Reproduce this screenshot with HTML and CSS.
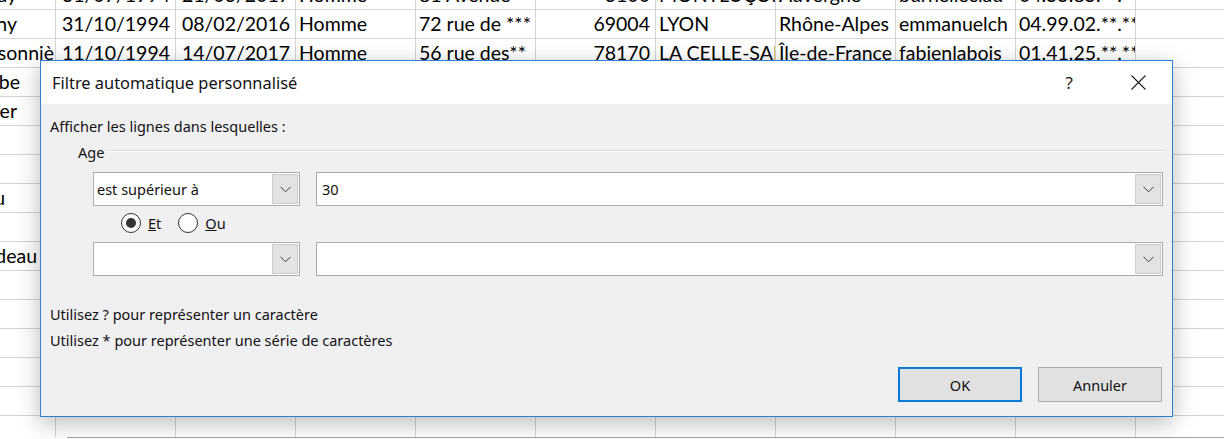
FILE: index.html
```html
<!DOCTYPE html>
<html lang="fr">

<head>
    <meta charset="UTF-8">
    <meta name="viewport" content="width=device-width, initial-scale=1.0">
    <title>Filtre automatique personnalisé</title>
    <link rel="stylesheet" href="styles.css">
</head>

<body>
    <div class="sheet">
        <div class="rows">
            <div class="row">
                <div class="cell first">nday</div>
                <div class="cell num">31/07/1994</div>
                <div class="cell num">21/03/2017</div>
                <div class="cell">Homme</div>
                <div class="cell">81 Avenue</div>
                <div class="cell num">3100</div>
                <div class="cell">MONTLUÇON</div>
                <div class="cell">Auvergne</div>
                <div class="cell">burnelleclau</div>
                <div class="cell">04.55.85.**.**</div>
            </div>
            <div class="row">
                <div class="cell first">ny</div>
                <div class="cell num">31/10/1994</div>
                <div class="cell num">08/02/2016</div>
                <div class="cell">Homme</div>
                <div class="cell">72 rue de ***</div>
                <div class="cell num">69004</div>
                <div class="cell">LYON</div>
                <div class="cell">Rhône-Alpes</div>
                <div class="cell">emmanuelch</div>
                <div class="cell">04.99.02.**.**</div>
            </div>
            <div class="row">
                <div class="cell first flush">sonniè</div>
                <div class="cell num">11/10/1994</div>
                <div class="cell num">14/07/2017</div>
                <div class="cell">Homme</div>
                <div class="cell">56 rue des**</div>
                <div class="cell num">78170</div>
                <div class="cell">LA CELLE-SAINT</div>
                <div class="cell">Île-de-France</div>
                <div class="cell">fabienlabois</div>
                <div class="cell">01.41.25.**.**</div>
            </div>
            <div class="row"><div class="cell first wide">be</div></div>
            <div class="row"><div class="cell first">er</div></div>
            <div class="row"></div>
            <div class="row"></div>
            <div class="row"><div class="cell first short">u</div></div>
            <div class="row"></div>
            <div class="row"><div class="cell first mid">deau</div></div>
        </div>
    </div>
    <div class="sheet-bottom"></div>

    <div class="dialog">
        <div class="titlebar">
            <span class="title">Filtre automatique personnalisé</span>
            <span class="help">?</span>
            <span class="close">
                <svg width="15" height="15" viewBox="0 0 15 15">
                    <path d="M0.5 0.5 L14.5 14.5 M14.5 0.5 L0.5 14.5" stroke="#1a1a1a" stroke-width="1.1" fill="none" />
                </svg>
            </span>
        </div>
        <div class="dialog-body">
            <p class="intro">Afficher les lignes dans lesquelles :</p>
            <div class="group-label"><span>Age</span></div>

            <div class="crit-row">
                <div class="combo op">
                    <span class="combo-text">est supérieur à</span>
                    <span class="combo-btn">
                        <svg width="11" height="7" viewBox="0 0 11 7">
                            <polyline points="0.5,0.8 5.5,5.8 10.5,0.8" stroke="#3c3c3c" fill="none" />
                        </svg>
                    </span>
                </div>
                <div class="combo value">
                    <span class="combo-text">30</span>
                    <span class="combo-btn">
                        <svg width="11" height="7" viewBox="0 0 11 7">
                            <polyline points="0.5,0.8 5.5,5.8 10.5,0.8" stroke="#3c3c3c" fill="none" />
                        </svg>
                    </span>
                </div>
            </div>

            <div class="radios">
                <label class="radio"><span class="dot checked"></span><span><u>E</u>t</span></label>
                <label class="radio"><span class="dot"></span><span><u>O</u>u</span></label>
            </div>

            <div class="crit-row second">
                <div class="combo op">
                    <span class="combo-text"></span>
                    <span class="combo-btn">
                        <svg width="11" height="7" viewBox="0 0 11 7">
                            <polyline points="0.5,0.8 5.5,5.8 10.5,0.8" stroke="#3c3c3c" fill="none" />
                        </svg>
                    </span>
                </div>
                <div class="combo value">
                    <span class="combo-text"></span>
                    <span class="combo-btn">
                        <svg width="11" height="7" viewBox="0 0 11 7">
                            <polyline points="0.5,0.8 5.5,5.8 10.5,0.8" stroke="#3c3c3c" fill="none" />
                        </svg>
                    </span>
                </div>
            </div>

            <p class="hint first-hint">Utilisez ? pour représenter un caractère</p>
            <p class="hint">Utilisez * pour représenter une série de caractères</p>

            <div class="buttons">
                <button class="btn default">OK</button>
                <button class="btn">Annuler</button>
            </div>
        </div>
    </div>
</body>

</html>
```

FILE: styles.css
```css
* {
    margin: 0;
    padding: 0;
    box-sizing: border-box;
}

body {
    position: relative;
    width: 1224px;
    height: 439px;
    overflow: hidden;
    background: #ffffff;
    color: #000000;
}

/* spreadsheet behind the dialog */
.sheet {
    height: 437px;
    overflow: hidden;
    background-image:
        linear-gradient(to right, #d4d4d4 1px, transparent 1px),
        linear-gradient(to bottom, #d4d4d4 1px, transparent 1px);
    background-size: 120px 100%, 100% 29px;
    background-position: 55px 0, 0 9px;
    font-family: Lato, "Liberation Sans", sans-serif;
    font-size: 19.5px;
}

.rows {
    margin: -20px 0 0 -65px;
}

.row {
    display: grid;
    grid-template-columns: repeat(10, 120px);
    height: 29px;
}

.cell {
    overflow: hidden;
    white-space: nowrap;
    line-height: 30px;
    padding: 0 3px 0 4px;
}

.cell.num {
    text-align: right;
    padding-right: 5px;
}

/* first column: only the end of each name shows left of the grid */
.cell.first {
    text-align: right;
    padding-right: 38px;
}

.cell.first.wide {
    padding-right: 35px;
}

.cell.first.flush {
    padding-right: 1px;
}

.cell.first.short {
    padding-right: 50px;
}

.cell.first.mid {
    padding-right: 18px;
}

.sheet-bottom {
    height: 2px;
    margin-left: 67px;
    border-top: 1px solid #a3a3a3;
}

/* dialog */
.dialog {
    position: absolute;
    left: 40px;
    top: 60px;
    width: 1133px;
    height: 357px;
    border: 1px solid #2f7fd0;
    background: #f0eff1;
    box-shadow: 0 6px 22px rgba(0, 0, 0, 0.28);
    font-family: "Noto Sans", "Open Sans", sans-serif;
    font-size: 14.5px;
    color: #111111;
}

.titlebar {
    display: flex;
    align-items: center;
    height: 43px;
    background: #ffffff;
    padding-left: 11px;
}

.title {
    flex: 1;
    font-size: 16.4px;
}

.help {
    font-size: 17px;
    margin-right: 58px;
    color: #222222;
}

.close {
    display: flex;
    margin-right: 26px;
}

.dialog-body {
    padding: 12px 9px 0 9px;
}

.intro,
.hint {
    line-height: 20px;
}

.group-label {
    display: flex;
    align-items: center;
    margin: 6px 0 0 28px;
    line-height: 20px;
}

.group-label::after {
    content: "";
    flex: 1;
    height: 1px;
    margin: -3px 0 0 6px;
    background: #d9d9d9;
    border-bottom: 1px solid #fbfbfb;
}

.crit-row {
    display: flex;
    gap: 16px;
    margin: 10px 0 0 43px;
}

.crit-row.second {
    margin-top: 9px;
}

.combo {
    display: flex;
    align-items: center;
    height: 34px;
    border: 1px solid #acacac;
    background: #ffffff;
}

.combo.op {
    width: 207px;
}

.combo.value {
    flex: 1;
}

.combo-text {
    flex: 1;
    padding-left: 3px;
    white-space: nowrap;
}

.combo.value .combo-text {
    padding-left: 5px;
}

.combo-btn {
    display: flex;
    align-items: center;
    justify-content: center;
    width: 26px;
    height: 30px;
    margin-right: 1px;
    background: #e3e3e3;
    border: 1px solid #cdcdcd;
}

.radios {
    display: flex;
    align-items: center;
    gap: 17px;
    height: 20px;
    margin: 7px 0 0 71px;
}

.radio {
    display: flex;
    align-items: center;
    gap: 7px;
}

.dot {
    display: flex;
    align-items: center;
    justify-content: center;
    width: 20px;
    height: 20px;
    border: 1px solid #333333;
    border-radius: 50%;
    background: #ffffff;
}

.dot.checked::before {
    content: "";
    width: 10px;
    height: 10px;
    border-radius: 50%;
    background: #333333;
}

.hint.first-hint {
    margin-top: 28px;
}

.hint {
    margin-top: 6px;
}

.buttons {
    display: flex;
    justify-content: flex-end;
    gap: 16px;
    margin: 17px 1px 0 0;
}

.btn {
    width: 124px;
    height: 35px;
    border: 1px solid #adadad;
    background: #e1e1e1;
    font-family: inherit;
    font-size: 14.5px;
    color: #111111;
}

.btn.default {
    border: 2px solid #0a78d4;
}
```
